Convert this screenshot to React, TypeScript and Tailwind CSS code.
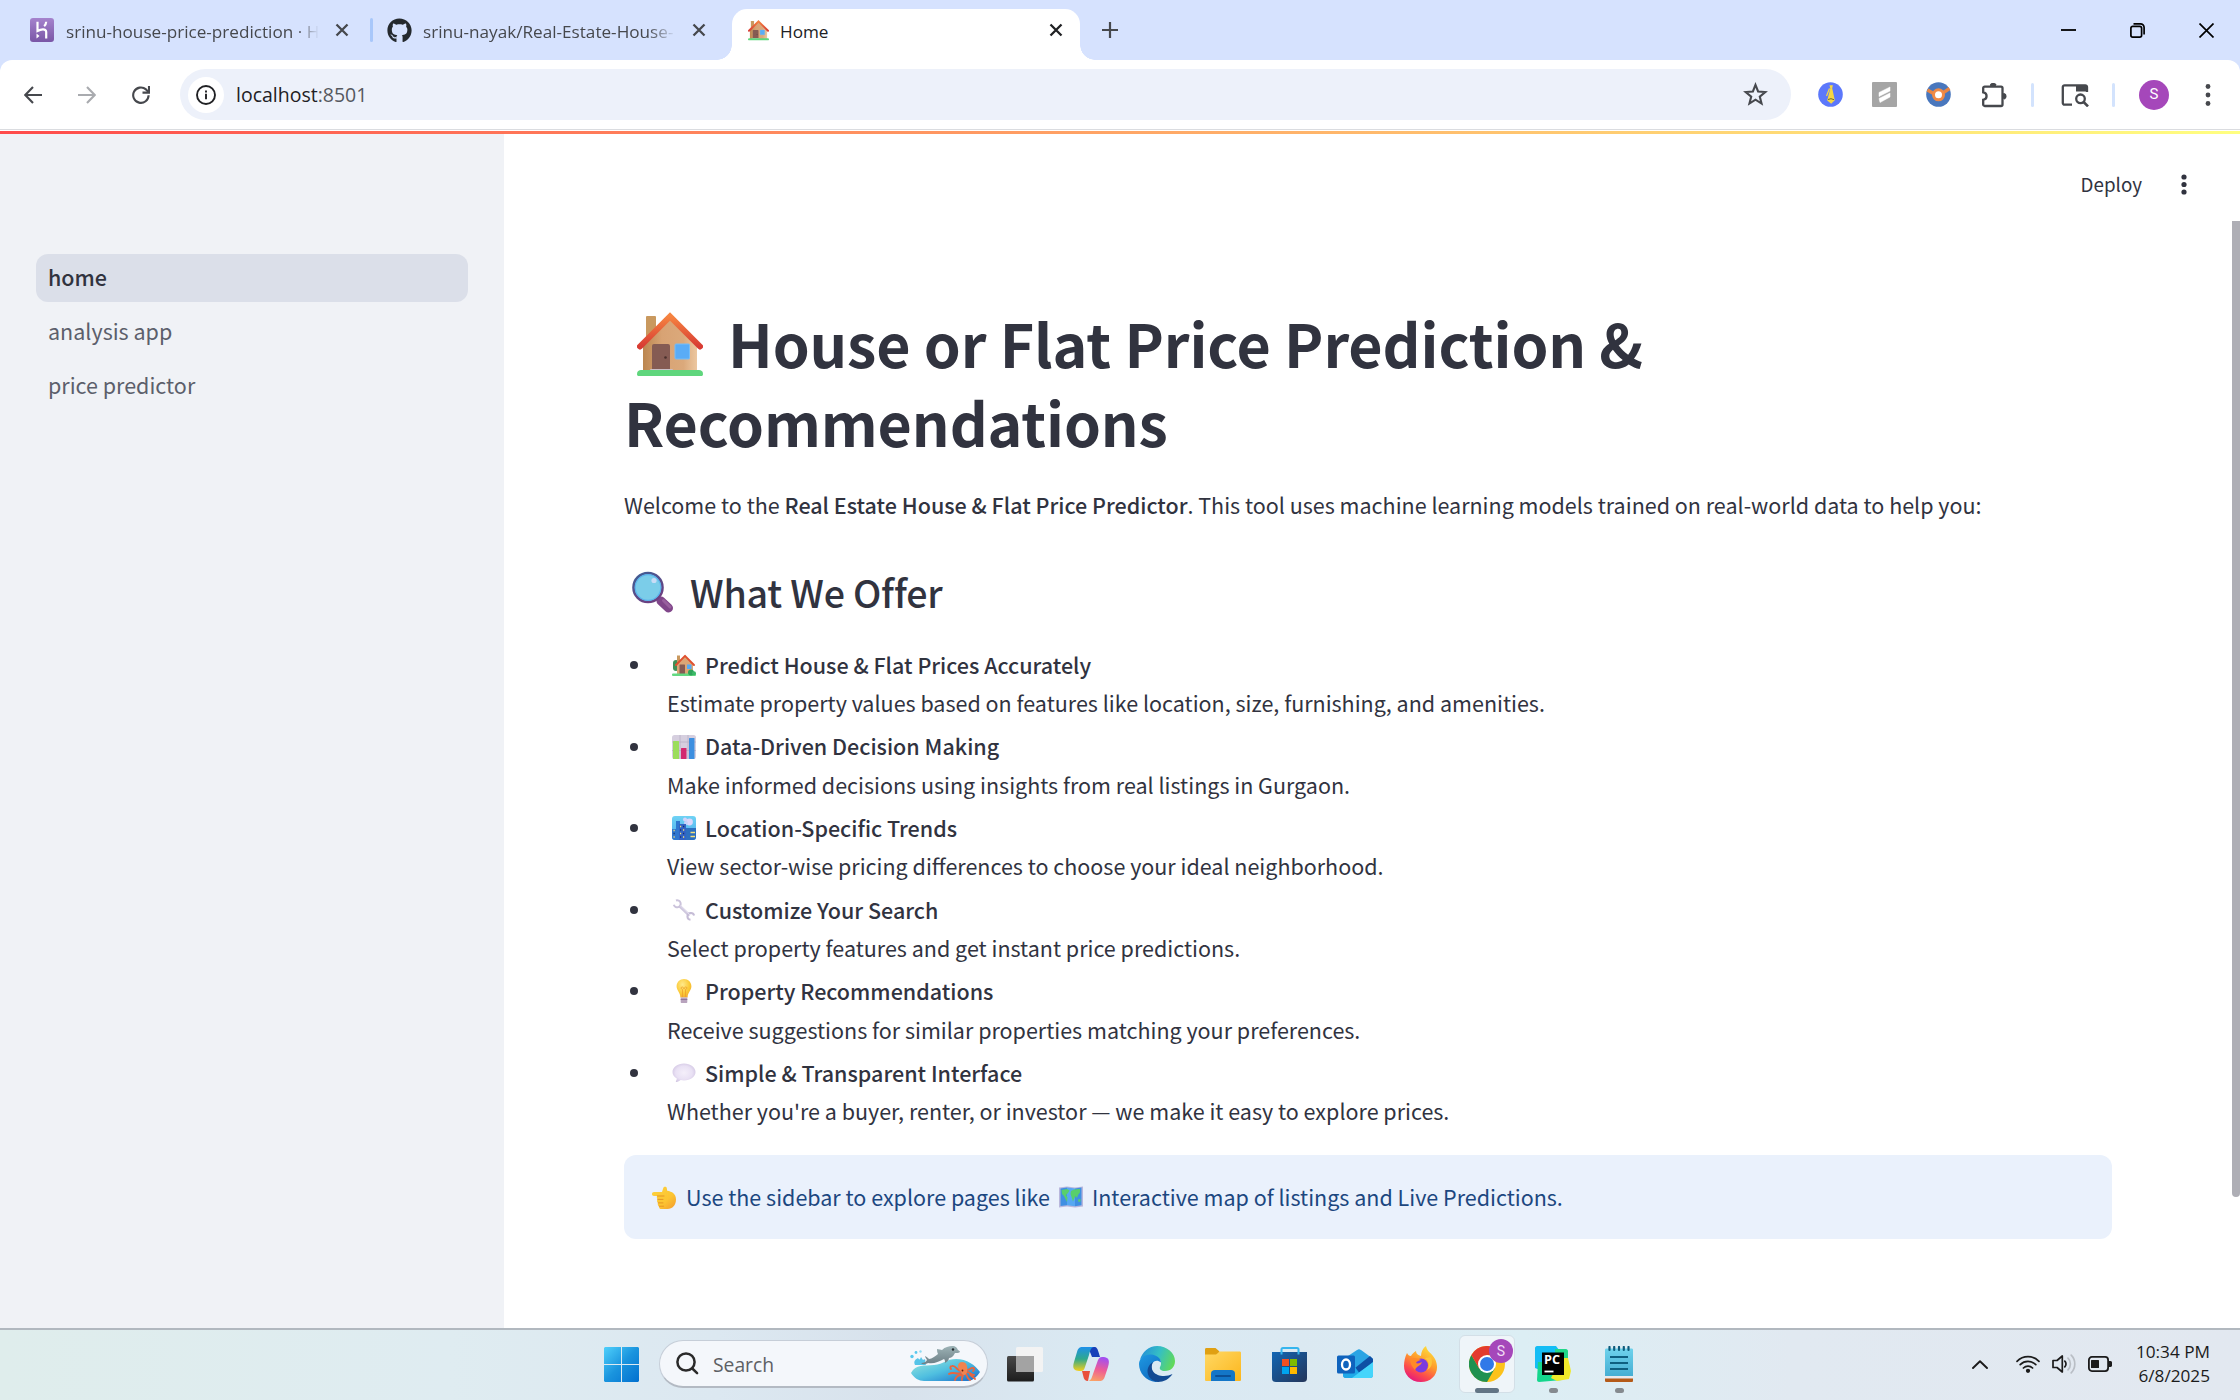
import React from 'react';
import { FaGithub } from 'react-icons/fa';

type IconProps = { className?: string };

/* ---------- emoji drawings ---------- */

function HouseEmoji({ className }: IconProps) {
  return (
    <svg viewBox="0 0 66 64" className={className}>
      <defs>
        <linearGradient id="wall" x1="0" y1="0" x2="1" y2="0">
          <stop offset="0" stopColor="#bb8650" />
          <stop offset="0.35" stopColor="#d8a374" />
          <stop offset="0.75" stopColor="#dba97b" />
          <stop offset="1" stopColor="#ecc7a0" />
        </linearGradient>
        <linearGradient id="roof" x1="0" y1="0" x2="0" y2="1">
          <stop offset="0" stopColor="#f58340" />
          <stop offset="1" stopColor="#d83b33" />
        </linearGradient>
      </defs>
      <rect x="9" y="4" width="10" height="26" rx="1" fill="#c9995f" />
      <path d="M6 33 33 6l27 27v27H6z" fill="url(#wall)" />
      <path d="M3 34.500 33 4.500l30 30" fill="none" stroke="url(#roof)" strokeWidth="6" strokeLinecap="round" strokeLinejoin="miter" />
      <rect x="15" y="32" width="18" height="28" rx="2" fill="#855b53" />
      <circle cx="28.500" cy="45.500" r="1.300" fill="#4a302c" />
      <rect x="13" y="57" width="23" height="3" rx="1" fill="#c9bfc6" />
      <rect x="38" y="32" width="14.500" height="15" rx="1" fill="#5aacf6" stroke="#78bdf5" strokeWidth="1" />
      <path d="M0 62c0-3 2-4 4-4h58c2 0 4 1 4 4 0 1.500-.5 2-2 2H2c-1.500 0-2-.5-2-2z" fill="#5fd67d" />
    </svg>
  );
}

function GardenHouseEmoji({ className }: IconProps) {
  return (
    <svg viewBox="0 0 24 22" className={className}>
      <rect x="1" y="6" width="6" height="11" rx="3" fill="#3f8f57" />
      <rect x="5" y="1.500" width="3" height="7" fill="#c9995f" />
      <path d="M5 10l8-8 8 8v10.500H5z" fill="#dba676" />
      <path d="M4 11 13 1.800 22 11" fill="none" stroke="#e0502f" strokeWidth="1.900" strokeLinecap="round" strokeLinejoin="round" />
      <rect x="7.500" y="10.500" width="5.500" height="9.500" rx="0.600" fill="#855b53" />
      <rect x="15" y="10.500" width="4.500" height="4.500" fill="#55a9f4" />
      <rect x="0" y="19.500" width="24" height="2.500" rx="1" fill="#63d982" />
      <circle cx="19" cy="18.500" r="3" fill="#2fa45a" />
      <circle cx="22" cy="19.200" r="2" fill="#3bb868" />
    </svg>
  );
}

function MagnifierEmoji({ className }: IconProps) {
  return (
    <svg viewBox="0 0 42 42" className={className}>
      <defs>
        <linearGradient id="rim" x1="0" y1="0" x2="0.6" y2="1">
          <stop offset="0" stopColor="#3d5f95" />
          <stop offset="1" stopColor="#6d3f80" />
        </linearGradient>
      </defs>
      <path d="M29 30 36.500 37" stroke="#80468a" strokeWidth="9" strokeLinecap="round" />
      <path d="M31.500 29.500 38 36" stroke="#98609e" strokeWidth="3" strokeLinecap="round" />
      <circle cx="16" cy="16.500" r="14.500" fill="#7bcde9" stroke="url(#rim)" strokeWidth="2.600" />
      <circle cx="16" cy="16.500" r="12.800" fill="none" stroke="#5cb4ec" strokeWidth="1.200" />
      <circle cx="22" cy="9.500" r="2.600" fill="#c9dcf6" />
    </svg>
  );
}

function ChartEmoji({ className }: IconProps) {
  return (
    <svg viewBox="0 0 24 24" className={className}>
      <rect width="24" height="24" rx="2.500" fill="#d6cfdf" />
      <path d="M0 7h24M0 15.500h24M8 0v24M16 0v24" stroke="#b9b0c4" strokeWidth="0.800" />
      <rect x="1" y="6" width="6" height="18" rx="0.500" fill="#9bdd5c" />
      <rect x="9" y="13" width="5.500" height="11" rx="0.500" fill="#d3296f" />
      <rect x="17" y="3" width="5.500" height="21" rx="0.500" fill="#3d8fe0" />
    </svg>
  );
}

function CityEmoji({ className }: IconProps) {
  return (
    <svg viewBox="0 0 24 24" className={className}>
      <defs>
        <clipPath id="cityClip"><rect width="24" height="24" rx="3" /></clipPath>
        <linearGradient id="sky" x1="0" y1="0" x2="0" y2="1">
          <stop offset="0" stopColor="#6fd3f5" />
          <stop offset="1" stopColor="#4aa7ea" />
        </linearGradient>
      </defs>
      <g clipPath="url(#cityClip)">
        <rect width="24" height="24" fill="url(#sky)" />
        <circle cx="13" cy="3.500" r="2" fill="#d3d3fa" />
        <circle cx="17.500" cy="6" r="3.400" fill="#dcd6fb" />
        <circle cx="14" cy="7" r="2" fill="#c7d2f8" />
        <path d="M0 13h4V5h4v19H0z" fill="#2f76cf" />
        <path d="M7 8h7v16H7z" fill="#3263c4" />
        <path d="M14 12h10v12H14z" fill="#2c6fc0" />
        <path d="M8 10.500h1.200M11 14h1.200M8 17.500h1.200M11 21h1.200M1.500 14.500h1.200M1.500 21h1.200" stroke="#f4e07a" strokeWidth="1.500" />
        <path d="M11 10.500h1.200M8 14h1.200M1.500 17.500h1.200M11 17.500h1.200M8 21h1.200" stroke="#16306f" strokeWidth="1.500" />
        <path d="M18.500 16.500H23M18.500 20.500H23" stroke="#f4e07a" strokeWidth="1.400" />
      </g>
    </svg>
  );
}

function WrenchEmoji({ className }: IconProps) {
  return (
    <svg viewBox="0 0 24 24" className={className}>
      <path d="M7.500 8 17.500 17.500" stroke="#cfc8de" strokeWidth="3" />
      <path d="M4 2.500a3.500 3.500 0 1 1-2.200 4.200" fill="none" stroke="#cbc3db" strokeWidth="2" />
      <path d="M18.500 21.800a3.400 3.400 0 1 1 3.600-4.300" fill="none" stroke="#c5bcd6" strokeWidth="2" />
      <path d="M8 7.500 18 17" stroke="#e4dff0" strokeWidth="1" />
    </svg>
  );
}

function BulbEmoji({ className }: IconProps) {
  return (
    <svg viewBox="0 0 24 24" className={className}>
      <defs>
        <radialGradient id="bulb" cx="0.4" cy="0.3" r="0.8">
          <stop offset="0" stopColor="#ffe98a" />
          <stop offset="0.6" stopColor="#fbc934" />
          <stop offset="1" stopColor="#f0a42f" />
        </radialGradient>
      </defs>
      <path d="M12 0c4.200 0 7.400 3.200 7.400 7.300 0 4.200-3.600 5.900-3.800 11.200H8.400C8.200 13.200 4.600 11.500 4.600 7.300 4.600 3.200 7.800 0 12 0z" fill="url(#bulb)" />
      <path d="M10.500 18V10.500c-2-.5-1.500-3 0-2.500s1 2 1.500 2 0-1.500 1.500-2 2 2 0 2.500V18" fill="none" stroke="#eda02c" strokeWidth="0.800" />
      <path d="M8.700 18.500h6.600V23c0 .6-.4 1-1 1H9.700c-.6 0-1-.4-1-1z" fill="#b8a3bd" />
      <path d="M8.700 20.500h6.600" stroke="#8c6f96" strokeWidth="0.900" />
    </svg>
  );
}

function SpeechEmoji({ className }: IconProps) {
  return (
    <svg viewBox="0 0 24 20" className={className}>
      <defs>
        <radialGradient id="speech" cx="0.5" cy="0.5" r="0.6">
          <stop offset="0" stopColor="#f4effa" />
          <stop offset="0.600" stopColor="#e9e1f4" />
          <stop offset="1" stopColor="#cdc0df" />
        </radialGradient>
      </defs>
      <path d="M12 .5c6.400 0 11.500 3.700 11.500 8.500s-5.100 8.500-11.500 8.500c-1.200 0-2.400-.1-3.400-.4-1 1-2.600 1.900-4.300 1.900-.5 0-.6-.5-.3-.9.500-.7.800-1.600.8-2.500C2.200 14.100.5 11.700.5 9 .5 4.200 5.600.5 12 .5z" fill="url(#speech)" />
    </svg>
  );
}

function PointLeftEmoji({ className }: IconProps) {
  return (
    <svg viewBox="0 0 24 23" className={className}>
      <defs>
        <linearGradient id="hand" x1="0" y1="0" x2="1" y2="1">
          <stop offset="0" stopColor="#fdd23e" />
          <stop offset="0.6" stopColor="#fcc532" />
          <stop offset="1" stopColor="#f39a2d" />
        </linearGradient>
      </defs>
      <path d="M2 6h8l1.200-3.800C11.700.3 14.500.2 14.800 2.200l.4 2.600C20 5.500 24 8 24 13.500 24 19 20.500 23 15.500 23H9.500c-2 0-2.800-1.600-2.300-2.800-1.400-.5-1.800-2-1.100-3.200-1.300-.7-1.500-2.600-.4-3.500C4.600 12.500 4.600 11 5.300 10H2C-.7 10-.7 6 2 6z" fill="url(#hand)" />
      <path d="M5.700 13.400H11M6.200 16.900H11M7.200 20.200H11.500M5.300 10H12" stroke="#e28e23" strokeWidth="0.900" strokeLinecap="round" />
    </svg>
  );
}

function MapEmoji({ className }: IconProps) {
  return (
    <svg viewBox="0 0 24 22" className={className}>
      <path d="M0 1.500 8 .5l8 1L24 .5V20.500l-8 1-8-1-8 1z" fill="#b9b7dc" />
      <path d="M1.500 2.500 8 1.500v17.700l-6.500.8z" fill="#3f8fe2" />
      <path d="M8 1.500l8 1v17.700l-8-1z" fill="#56a8f2" />
      <path d="M16 2.500l6.500-1v17.700l-6.500 1z" fill="#3f8fe2" />
      <path d="M2.500 4 8 3l2.500 1.500L9 7 7 9l1.500 2.500L8 16l-1.500-3L5 10 3 8z" fill="#58cf6b" />
      <path d="M12 5l3-1.500L21 3v3.500L19 9l-1 3-1.500-2L15 13l-1 2.500L12.500 11 11.500 8z" fill="#58cf6b" />
      <path d="M19 13.500l2.500-.5v2.500L19.500 16z" fill="#58cf6b" />
    </svg>
  );
}

/* ---------- browser chrome ---------- */

function HerokuIcon() {
  return (
    <svg viewBox="0 0 24 24" className="size-6">
      <defs>
        <linearGradient id="heroku" x1="0" y1="0" x2="0" y2="1">
          <stop offset="0" stopColor="#a583cd" />
          <stop offset="1" stopColor="#7a56a6" />
        </linearGradient>
      </defs>
      <rect width="24" height="24" rx="3" fill="url(#heroku)" />
      <path d="M7.500 3.800V13c3-1.600 8.700-2.800 8.700.9v6.500M16.200 3.800c-.1 1.900-.8 3.300-2.100 4.400" fill="none" stroke="#fff" strokeWidth="2.200" />
      <path d="M6.500 15.500l3 2.500-3 2.500z" fill="#fff" />
    </svg>
  );
}

function CloseMark({ className }: IconProps) {
  return (
    <svg viewBox="0 0 14 14" className={className} fill="none" stroke="currentColor" strokeWidth="2.300">
      <path d="M1.500 1.500l11 11M12.500 1.500l-11 11" />
    </svg>
  );
}

function TabStrip() {
  return (
    <div className="flex h-[60px] bg-[#d6e2fe] font-['Open_Sans','Noto_Sans',sans-serif] text-[17.15px] leading-6 text-[#46484d]">
      <div className="flex w-[370px] items-center pl-[30px]">
        <HerokuIcon />
        <div className="mt-[3px] ml-3 w-[253px] overflow-hidden whitespace-nowrap [mask-image:linear-gradient(90deg,#000_91%,transparent)]">
          srinu-house-price-prediction · H
        </div>
        <CloseMark className="ml-4 size-[14px]" />
      </div>
      <div className="mt-[18px] h-6 w-[3px] rounded-full bg-[#a8c7fa]" />
      <div className="flex w-[359px] items-center pl-[14px]">
        <FaGithub className="size-[25px] text-[#24292e]" />
        <div className="mt-[3px] ml-[11px] w-[253px] overflow-hidden whitespace-nowrap [mask-image:linear-gradient(90deg,#000_89%,transparent)]">
          srinu-nayak/Real-Estate-House-
        </div>
        <CloseMark className="ml-4 size-[14px]" />
      </div>
      <div className="relative mt-[9px] flex h-[51px] w-[348px] items-center rounded-t-[15px] bg-white pb-[9px] pl-4 text-[#202124]">
        <div className="absolute bottom-0 -left-[15px] size-[15px] bg-[radial-gradient(circle_at_0_0,transparent_14.5px,white_15px)]" />
        <div className="absolute -right-[15px] bottom-0 size-[15px] bg-[radial-gradient(circle_at_100%_0,transparent_14.5px,white_15px)]" />
        <HouseEmoji className="h-[22px] w-[21px]" />
        <span className="mt-[3px] ml-[11px] flex-1">Home</span>
        <CloseMark className="mr-[17px] size-[14px]" />
      </div>
      <svg viewBox="0 0 16 16" className="mt-[22px] ml-[22px] size-4 text-[#46484d]" stroke="currentColor" strokeWidth="2.200">
        <path d="M8 0v16M0 8h16" />
      </svg>
      <div className="mr-[26px] ml-auto flex items-center gap-[54px] text-black">
        <svg viewBox="0 0 15 15" className="size-[15px]"><path d="M0 7h15" stroke="currentColor" strokeWidth="1.800" /></svg>
        <svg viewBox="0 0 15 15" className="size-[15px]" fill="none" stroke="currentColor" strokeWidth="1.700">
          <rect x="0.900" y="3.400" width="10.700" height="10.700" rx="1.800" />
          <path d="M3.500.9h7a3.600 3.600 0 0 1 3.600 3.600v7" />
        </svg>
        <svg viewBox="0 0 15 15" className="size-[15px]"><path d="M.5.5l14 14M14.500.5l-14 14" stroke="currentColor" strokeWidth="1.700" /></svg>
      </div>
    </div>
  );
}

function Toolbar() {
  return (
    <div className="h-[70px] bg-[#d6e2fe]">
      <div className="flex h-[70px] items-center rounded-t-xl border-b border-[#dadce0] bg-white pl-[24px] text-[#46484d]">
        <svg viewBox="0 0 18 18" className="size-[18px]" fill="none" stroke="currentColor" strokeWidth="2.100">
          <path d="M18 9H1.500M9 1L1.300 9 9 17" />
        </svg>
        <svg viewBox="0 0 18 18" className="ml-[36px] size-[18px] text-[#a9abaf]" fill="none" stroke="currentColor" strokeWidth="2.100">
          <path d="M0 9h16.500M9 1l7.700 8L9 17" />
        </svg>
        <svg viewBox="0 0 18 18" className="ml-[36px] size-[18px]" fill="none" stroke="currentColor" strokeWidth="2.100">
          <path d="M16.600 9.200A7.700 7.700 0 1 1 14 3.400l2.300 2.300" />
          <path d="M17 0v6.600h-6.500" />
        </svg>
        <div className="ml-[30px] flex h-[51px] w-[1611px] items-center rounded-full bg-[#edf1fa] pr-[23px] pl-2">
          <div className="flex size-9 items-center justify-center rounded-full bg-white text-[#202124]">
            <svg viewBox="0 0 20 20" className="size-5" fill="none" stroke="currentColor" strokeWidth="1.900">
              <circle cx="10" cy="10" r="9" />
              <path d="M10 8.800v5.400M10 5.600v2" />
            </svg>
          </div>
          <div className="ml-3 flex-1 font-['Open_Sans','Noto_Sans',sans-serif] text-[19.5px] leading-7 text-[#1f2023]">
            localhost<span className="text-[#55585e]">:8501</span>
          </div>
          <svg viewBox="0 0 24 24" className="size-[25px]" fill="none" stroke="currentColor" strokeWidth="2">
            <path d="M12 2.700l2.500 6.400 6.900.5-5.300 4.400 1.700 6.700L12 17l-5.800 3.700L7.900 14 2.600 9.600l6.900-.5z" />
          </svg>
        </div>
        <svg viewBox="0 0 25 25" className="ml-[27px] size-[25px]">
          <circle cx="12.500" cy="12.500" r="12.300" fill="#5c78fb" />
          <path d="M11.500 3.200h3.400l-.7 3 2.600 12-3.600 3.600-4-3.300L12.300 6.500z" fill="#f6d743" />
          <path d="M11.500 6.500 8.500 14" stroke="#f6d743" strokeWidth="1.200" />
          <path d="M10 17.500l3-.8 3 1" stroke="#5a5a2c" strokeWidth="0.900" fill="none" />
        </svg>
        <svg viewBox="0 0 25 25" className="ml-[29px] size-[25px]">
          <rect width="25" height="25" rx="1" fill="#a5a5a5" />
          <path d="M7 10.500 18 5v4L7 14.500zM7 16.500l11-5.500v4L8 20.500z" fill="#fff" stroke="#fff" strokeWidth="0.500" strokeLinejoin="round" />
        </svg>
        <svg viewBox="0 0 25 25" className="ml-[29px] size-[25px]">
          <circle cx="12.500" cy="12.500" r="12.300" fill="#4977bd" />
          <path d="M1.500 8l6 3.500M23.500 6.500l-6.500 4.300" stroke="#e98543" strokeWidth="3.400" />
          <circle cx="12.500" cy="12.800" r="5" fill="#fff" stroke="#f08a46" strokeWidth="3" />
        </svg>
        <svg viewBox="0 0 26 26" className="ml-[30px] size-[26px]" fill="none" stroke="currentColor" strokeWidth="2.300">
          <path d="M3.700 4.600H20a1.500 1.500 0 0 1 1.500 1.500v16.400a1.500 1.500 0 0 1-1.500 1.500H3.700a1.500 1.500 0 0 1-1.500-1.500v-4.700c4.500-.6 4.500-6.900 0-7.500V6.100a1.500 1.500 0 0 1 1.500-1.500z" />
          <path d="M9 4a3 3 0 0 1 6 0zM21.500 11a3 3 0 0 1 0 6z" fill="currentColor" stroke="none" />
          <path d="M10 3.200a2.400 1.600 0 0 1 4.600 0M23 12a2 2.400 0 0 1 0 4.600" />
        </svg>
        <div className="ml-6 h-6 w-[3px] rounded-full bg-[#d3e3fd]" />
        <svg viewBox="0 0 28 24" className="ml-[27px] h-6 w-7" fill="none" stroke="currentColor" strokeWidth="2.300">
          <path d="M11 21.700H3.500A1.700 1.700 0 0 1 1.800 20V4a1.700 1.700 0 0 1 1.700-1.700h20.800a1.700 1.700 0 0 1 1.700 1.700v5" />
          <path d="M15 2h11v6.500H15z" fill="currentColor" stroke="none" />
          <circle cx="19.500" cy="15.800" r="4.300" />
          <path d="M22.600 19l4.400 4.400" strokeWidth="2.600" />
        </svg>
        <div className="ml-[23px] h-6 w-[3px] rounded-full bg-[#d3e3fd]" />
        <div className="ml-[24px] flex size-[30px] items-center justify-center rounded-full bg-[#a547ba] font-['Roboto',sans-serif] text-[15px] text-white">S</div>
        <svg viewBox="0 0 6 22" className="ml-[36px] h-[22px] w-1.5 fill-current">
          <circle cx="3" cy="2.500" r="2.400" /><circle cx="3" cy="11" r="2.400" /><circle cx="3" cy="19.500" r="2.400" />
        </svg>
      </div>
    </div>
  );
}

/* ---------- page ---------- */

const offers = [
  { Icon: GardenHouseEmoji, title: 'Predict House & Flat Prices Accurately', text: 'Estimate property values based on features like location, size, furnishing, and amenities.' },
  { Icon: ChartEmoji, title: 'Data-Driven Decision Making', text: 'Make informed decisions using insights from real listings in Gurgaon.' },
  { Icon: CityEmoji, title: 'Location-Specific Trends', text: 'View sector-wise pricing differences to choose your ideal neighborhood.' },
  { Icon: WrenchEmoji, title: 'Customize Your Search', text: 'Select property features and get instant price predictions.' },
  { Icon: BulbEmoji, title: 'Property Recommendations', text: 'Receive suggestions for similar properties matching your preferences.' },
  { Icon: SpeechEmoji, title: 'Simple & Transparent Interface', text: "Whether you're a buyer, renter, or investor — we make it easy to explore prices." },
];

function Sidebar() {
  return (
    <nav className="flex w-[504px] flex-col gap-1.5 bg-[#f0f2f6] px-9 pt-[120px] leading-[46px] text-[#5c5f6b]">
      <a className="h-12 rounded-xl bg-[#dbdfe9] pl-3 font-medium text-[#31333f]">home</a>
      <a className="h-12 pl-3">analysis app</a>
      <a className="h-12 pl-3">price predictor</a>
    </nav>
  );
}

function Content() {
  return (
    <main className="flex w-[1736px] bg-white text-[#31333f]">
      <div className="w-[1608px] shrink-0 pt-[169px] pl-[120px]">
        <h1 className="text-[59.1px] leading-[79.2px] font-bold tracking-[-0.1px]">
          <span className="flex items-center">
            <HouseEmoji className="mt-[3px] mr-[25px] ml-[13px] h-[64px] w-[66px]" />
            House or Flat Price Prediction &
          </span>
          <span className="block">Recommendations</span>
        </h1>
        <p className="mt-[25px]">
          Welcome to the <strong className="font-medium">Real Estate House &amp; Flat Price Predictor</strong>. This tool uses machine learning models trained on real-world data to help you:
        </p>
        <h3 className="mt-[42px] flex h-[50px] items-center text-[37.6px] leading-[50px] font-medium tracking-[-0.2px]">
          <MagnifierEmoji className="mr-4 ml-2 size-[42px]" />
          What We Offer
        </h3>
        <ul className="mt-[29px] flex flex-col gap-[4.800px]">
          {offers.map(({ Icon, title, text }) => (
            <li key={title}>
              <div className="flex h-[38.4px] items-center font-medium">
                <span className="mr-[34px] ml-1.5 size-2 rounded-full bg-[#31333f]" />
                <Icon className="mr-[9px] h-6 w-6" />
                {title}
              </div>
              <div className="h-[38.4px] pl-[43px]">{text}</div>
            </li>
          ))}
        </ul>
        <div className="mt-[25px] flex h-[84px] items-center rounded-xl bg-[#eaf1fc] pl-[28px] text-[#1c4780]">
          <PointLeftEmoji className="mr-[10px] h-[23px] w-6" />
          Use the sidebar to explore pages like
          <MapEmoji className="mx-[9px] h-[22px] w-6" />
          Interactive map of listings and Live Predictions.
        </div>
      </div>
      <div className="flex w-[128px] flex-col items-end">
        <div className="mt-[35px] mr-[53px] flex h-[30px] shrink-0 items-center text-[18.8px] leading-[30px]">
          Deploy
          <svg viewBox="0 0 6 21" className="mt-px ml-[39px] h-[21px] w-1.5 shrink-0 fill-current">
            <circle cx="3" cy="3" r="2.600" /><circle cx="3" cy="10.500" r="2.600" /><circle cx="3" cy="18" r="2.600" />
          </svg>
        </div>
        <div className="mt-[22px] h-[976px] w-2 rounded-b bg-[#aeaeb5]" />
      </div>
    </main>
  );
}

/* ---------- taskbar ---------- */

function WindowsIcon() {
  return (
    <svg viewBox="0 0 35 35" className="size-[35px]">
      <defs>
        <linearGradient id="win" x1="0" y1="0" x2="35" y2="35" gradientUnits="userSpaceOnUse">
          <stop offset="0" stopColor="#4fd0fb" /><stop offset="0.500" stopColor="#1a94de" /><stop offset="1" stopColor="#0270cf" />
        </linearGradient>
      </defs>
      <path d="M1 0h16v17H0V1zM18 0h16l1 1v16H18zM0 18h17v17H1l-1-1zM18 18h17v16l-1 1H18z" fill="url(#win)" />
    </svg>
  );
}

function SeaScene() {
  return (
    <svg viewBox="0 0 70 37" className="h-[37px] w-[70px]">
      <defs>
        <linearGradient id="sea" x1="0" y1="0" x2="1" y2="1">
          <stop offset="0" stopColor="#9be8dc" /><stop offset="0.500" stopColor="#4fbfe0" /><stop offset="1" stopColor="#1769c9" />
        </linearGradient>
        <linearGradient id="dolphin" x1="0" y1="0" x2="0" y2="1">
          <stop offset="0" stopColor="#9db3b6" /><stop offset="1" stopColor="#6d7f86" />
        </linearGradient>
      </defs>
      <path d="M1 28C6 19 14 21 24 20c10-1 12-6 22-6 11 0 19 6 24 13-3 5-8 9-12 9H14C9 36 4 33 1 28z" fill="url(#sea)" />
      <path d="M5 20c-2-4 1-6 3-7 1 2 2 2 3-1l2 3c2-2 3 0 2 2l1 3z" fill="#56c4e8" />
      <circle cx="2" cy="11.500" r="1.700" fill="#58c8ee" /><circle cx="6" cy="7.500" r="1.400" fill="#58c8ee" /><circle cx="10.500" cy="6.500" r="1.200" fill="#8fdaf2" />
      <path d="M11 18c3 0 5-1 6-3-1-2-2-3-2-4 2 1 3 2 4 3 3 0 6-3 9-5-1-2-1-4-1-5 2 0 4 1 5 1 3-3 7-4 10-4 4 0 5 2 6 4 1 1 2 1 2 2-1 1-3 1-5 1-2 4-4 5-6 5 0 2-2 4-4 5 0-2 0-3-1-4-6 3-10 5-16 4-2 1-5 2-7 0z" fill="url(#dolphin)" />
      <circle cx="43" cy="4.500" r="1.200" fill="#242c30" />
      <g fill="none" stroke="#e8653f" strokeWidth="1.900" strokeLinecap="round">
        <path d="M51 26c-4 0-5-6-9-5-2 0-2 2-1 3M51 28c-4 2-8-2-12 1M52 30c-3 0-6 1-7 5M53 30c0 2-2 3-1 5M56 29c1 2 1 4 4 6M57 27c3 0 4 3 7 3M57 25c3 0 4-3 6-2 2 0 1 2 0 3M60 29c0 2 3 2 5 5" />
      </g>
      <path d="M51 27c-5-5-3-10 1-10 5 0 6 5 5 10-1 4-5 4-6 0z" fill="#f2834f" />
      <circle cx="52.500" cy="25.500" r="0.900" fill="#5a2117" />
    </svg>
  );
}

function CopilotIcon() {
  return (
    <svg viewBox="0 0 36 34" className="h-[34px] w-9">
      <defs>
        <linearGradient id="copA" x1="0" y1="0" x2="0" y2="1">
          <stop offset="0" stopColor="#1e90ea" /><stop offset="0.500" stopColor="#2fa98c" /><stop offset="1" stopColor="#f5cf1b" />
        </linearGradient>
        <linearGradient id="copB" x1="0.500" y1="0" x2="0.300" y2="1">
          <stop offset="0" stopColor="#a34ff0" /><stop offset="0.500" stopColor="#ee5c95" /><stop offset="1" stopColor="#f9a266" />
        </linearGradient>
      </defs>
      <path d="M15 0h6c3 0 3.500 2 4.500 5l1.500 5h-8z" fill="#173fb9" />
      <path d="M15 34c-3 0-4-2-4.500-4L9 24h8z" fill="#e9503c" />
      <path d="M9 0h12c-3 0-4 4-5 8l-4 12c-1 3-2 4-4 4C1 24-1 22 1 15L4 5c1-4 3-5 5-5z" fill="url(#copA)" />
      <path d="M27 34H15c3 0 4-4 5-7l5-14c1-2 2-3 4-3 7 0 8 3 6 10l-3 9c-1 4-3 5-5 5z" fill="url(#copB)" />
    </svg>
  );
}

function EdgeIcon() {
  return (
    <svg viewBox="0 0 36 36" className="size-9">
      <defs>
        <linearGradient id="edgeTop" x1="0" y1="0.300" x2="1" y2="0.600">
          <stop offset="0" stopColor="#2590d8" /><stop offset="0.500" stopColor="#35bfc4" /><stop offset="1" stopColor="#62da58" />
        </linearGradient>
        <linearGradient id="edgeSide" x1="0" y1="0" x2="0.600" y2="1">
          <stop offset="0" stopColor="#1f9ae2" /><stop offset="1" stopColor="#0f6ac0" />
        </linearGradient>
      </defs>
      <path d="M1 14C3 6 10 0 18 0c10 0 18 7 18 15 0 6-4 10-10 10-4 0-6-2-5-4 2-3 2-10-7-11C8 10 3 11 1 14z" fill="url(#edgeTop)" />
      <path d="M0 18C0 12 6 8 12 8.500c6 .5 10 4 10 8-5-4-10 0-9.500 5 .5 6 5 11 11 12-2 1.500-5 2.500-7 2.500C7 35 0 27 0 18z" fill="url(#edgeSide)" />
      <path d="M14 16c-4 8 2 14 11 14 3 0 6-1 8.500-2-3 5-9 8-14.500 8C11 35 7 28 9 22c1-3 3-5 5-6z" fill="#124a93" />
    </svg>
  );
}

function ExplorerIcon() {
  return (
    <svg viewBox="0 0 36 33" className="h-[33px] w-9">
      <defs>
        <linearGradient id="folder" x1="0" y1="0" x2="1" y2="1">
          <stop offset="0" stopColor="#ffd864" /><stop offset="1" stopColor="#fcb61c" />
        </linearGradient>
      </defs>
      <path d="M0 1.500C0 .5.500 0 1.500 0h9l4 3.500-3 4.500H0z" fill="#e0a012" />
      <path d="M0 6.500h11l4-3h19.500c1 0 1.500.5 1.500 1.500v26.500c0 1-.5 1.500-1.500 1.500h-33C.5 33 0 32.500 0 31.500z" fill="url(#folder)" />
      <path d="M6 33v-7c0-3 1.500-4 4-4h16c2.500 0 4 1 4 4v7z" fill="#1376c8" />
      <path d="M11 28h14" stroke="#0b4f96" strokeWidth="2" strokeLinecap="round" />
    </svg>
  );
}

function StoreIcon() {
  return (
    <svg viewBox="0 0 35 35" className="size-[35px]">
      <defs>
        <linearGradient id="store" x1="0" y1="0" x2="1" y2="1">
          <stop offset="0" stopColor="#1266b4" /><stop offset="1" stopColor="#243559" />
        </linearGradient>
      </defs>
      <path d="M9.500 8V2.500c0-1 .5-1.500 1.500-1.500h14c1 0 1.500.5 1.500 1.500V8" fill="none" stroke="#35b5ee" strokeWidth="2" />
      <path d="M0 5h35v26c0 3-1.500 4-4 4H4c-2.500 0-4-1-4-4z" fill="url(#store)" />
      <path d="M9.500 5v2.500M26.500 5v2.500" stroke="#35b5ee" strokeWidth="2" />
      <path d="M10 12h7v7h-7z" fill="#f25022" /><path d="M18 12h7v7h-7z" fill="#7fba00" />
      <path d="M10 20h7v7h-7z" fill="#00a4ef" /><path d="M18 20h7v7h-7z" fill="#ffb900" />
    </svg>
  );
}

function OutlookIcon() {
  return (
    <svg viewBox="0 0 36 36" className="size-9">
      <path d="M8 12 20 4c2-1 2-1 4 0l11 8c1 1 1 1 1 2v15c0 2-1 3-3 3H9c-2 0-3-1-3-3z" fill="#2aa4e4" />
      <path d="M18 22 33 10l3 3v4L21 27z" fill="#0e4fa5" />
      <path d="M6 21h12l8 11H9c-2 0-3-1-3-3z" fill="#1fa9e8" />
      <path d="M36 16v13c0 2-1 3-3 3H15z" fill="#45d5fb" />
      <rect y="9.500" width="18" height="18" rx="1.500" fill="#0f63bd" />
      <ellipse cx="9" cy="18.500" rx="4" ry="5" fill="none" stroke="#fff" strokeWidth="2.300" />
    </svg>
  );
}

function FirefoxIcon() {
  return (
    <svg viewBox="0 0 34 36" className="h-9 w-[34px]">
      <defs>
        <linearGradient id="fox" x1="0.800" y1="0" x2="0.300" y2="1">
          <stop offset="0" stopColor="#fde53e" /><stop offset="0.450" stopColor="#ff9a2c" /><stop offset="0.750" stopColor="#fb4a4d" /><stop offset="1" stopColor="#e4177f" />
        </linearGradient>
      </defs>
      <path d="M3 7c1 2 2 3 4 3 1-2 3-4 5-5 0 3 2 4 5 5 0-4 2-8 5-10 1 6 6 7 9 13 6 12-2 23-14 23C6 36 0 28 0 20c0-5 1-9 3-13z" fill="url(#fox)" />
      <circle cx="17" cy="19.500" r="7" fill="#7a3be0" />
      <path d="M6 13c4-2 8-1 11 1-3 1-4 1-5 3 2 1 4 0 6-1-1 4-6 4-7 8-3-3-5-7-5-11z" fill="#ff8a28" />
      <path d="M21 12c4 3 5 8 2 12 5-2 6-8 4-13z" fill="#fec53a" />
    </svg>
  );
}

function ChromeIcon() {
  return (
    <svg viewBox="0 0 36 36" className="size-9">
      <circle cx="18" cy="18" r="18" fill="#fcc21b" />
      <path d="M2.400 9A18 18 0 0 0 18 36l7.800-13.500L18 18 10.200 22.500z" fill="#209150" />
      <path d="M2.400 9A18 18 0 0 1 33.600 9H18v9l-7.800 4.500z" fill="#e33b2e" />
      <circle cx="18" cy="18" r="9" fill="#fff" /><circle cx="18" cy="18" r="7" fill="#3079e8" />
    </svg>
  );
}

function PyCharmIcon() {
  return (
    <svg viewBox="0 0 36 36" className="size-9">
      <path d="M0 2c0-1 1-2 2-2h19l6 8L5 24 0 22z" fill="#14bdf5" />
      <path d="M20 3h11c1 0 2 1 2 2v9L20 20z" fill="#21d789" />
      <path d="M3 16h10l14 18-23 2c-1 0-2-1-2-2z" fill="#14d68d" />
      <path d="M27 12h6l3 13-2 8-12 2-6-3 6-12z" fill="#f0ea2a" />
      <rect x="7" y="6.500" width="22" height="22.500" fill="#000" />
      <text x="9" y="18" fontSize="11.500" fontWeight="700" fill="#fff" fontFamily="Open Sans, sans-serif" textLength="16" lengthAdjust="spacingAndGlyphs">PC</text>
      <path d="M9.500 25.500h9" stroke="#fff" strokeWidth="1.800" />
    </svg>
  );
}

function NotepadIcon() {
  return (
    <svg viewBox="0 0 28 36" className="h-9 w-7">
      <defs>
        <linearGradient id="note" x1="0" y1="0" x2="0" y2="1">
          <stop offset="0" stopColor="#6fd2ec" /><stop offset="1" stopColor="#45aed3" />
        </linearGradient>
      </defs>
      <path d="M0 31h28v3.500c0 1-.5 1.500-1.500 1.500h-25C.5 36 0 35.500 0 34.500z" fill="#b45a19" />
      <path d="M0 29h28v3.500H0z" fill="#e9e9ec" />
      <path d="M1.500 2.500h25c1 0 1.500.5 1.500 1.500v26H0V4c0-1 .5-1.500 1.500-1.500z" fill="url(#note)" />
      <path d="M4.500 1v3M9.200 1v3M14 1v3M18.800 1v3M23.500 1v3" stroke="#0e5c7c" strokeWidth="2.200" strokeLinecap="round" />
      <path d="M5 11h18M5 17h18M5 23h18" stroke="#0e5f80" strokeWidth="1.900" />
    </svg>
  );
}

function TaskViewIcon() {
  return (
    <svg viewBox="0 0 36 35" className="h-[35px] w-9">
      <defs>
        <linearGradient id="tv" x1="0" y1="0" x2="0" y2="1">
          <stop offset="0" stopColor="#484848" /><stop offset="1" stopColor="#1d1d1d" />
        </linearGradient>
      </defs>
      <rect y="9" width="27" height="25.500" rx="1.500" fill="url(#tv)" />
      <rect x="9" y="0" width="27" height="25" rx="1.500" fill="#f3f3f3" />
      <path d="M9 9h18v16H10.500L9 23.500z" fill="#a3a3a3" />
    </svg>
  );
}

function Slot({ children, running }: { children: React.ReactNode; running?: boolean }) {
  return (
    <div className="relative flex h-[58px] w-14 items-center justify-center">
      {children}
      {running && <span className="absolute bottom-0 h-[5px] w-[9px] rounded-full bg-[#858a8f]" />}
    </div>
  );
}

function Taskbar() {
  return (
    <div className="flex h-[72px] items-start border-t-2 border-[#b1b8bf] bg-[linear-gradient(90deg,#dfedec_0%,#dfecf1_20%,#dce8f1_32%,#d8e2ec_40%,#daeaf3_50%,#dbe9f2_58%,#dceef4_68%,#e1e9f1_80%,#e2e8f0_100%)] pt-[5px]">
      <div className="ml-[593px] flex items-center gap-2.5">
        <Slot><WindowsIcon /></Slot>
        <div className="-mr-px flex h-12 w-[329px] items-center rounded-full border border-b-2 border-[#c6ced8] border-b-[#b3bac3] bg-[#f4f7fb] pr-[7px] pl-[16px]">
          <svg viewBox="0 0 23 23" className="size-[23px]" fill="none" stroke="#2a2a2a" strokeWidth="2.500" strokeLinecap="round">
            <circle cx="10" cy="10" r="8.600" /><path d="M16.300 16.500l4.800 4.700" />
          </svg>
          <span className="mt-[3px] ml-[14px] flex-1 font-['Open_Sans','Noto_Sans',sans-serif] text-[19.3px] text-[#5d6064]">Search</span>
          <SeaScene />
        </div>
        <Slot><TaskViewIcon /></Slot>
        <Slot><CopilotIcon /></Slot>
        <Slot><EdgeIcon /></Slot>
        <Slot><ExplorerIcon /></Slot>
        <Slot><StoreIcon /></Slot>
        <Slot><OutlookIcon /></Slot>
        <Slot><FirefoxIcon /></Slot>
        <div className="relative flex h-[58px] w-14 items-center justify-center rounded-md border border-[#d3dfe7] bg-[#eff5f9]">
          <ChromeIcon />
          <span className="absolute top-[3px] right-[1px] flex size-6 items-center justify-center rounded-full bg-[#a547ba] font-['Roboto',sans-serif] text-[14px] text-[#f0dcf5]">S</span>
          <span className="absolute -bottom-px h-[5px] w-6 rounded-full bg-[#627585]" />
        </div>
        <Slot running><PyCharmIcon /></Slot>
        <Slot running><NotepadIcon /></Slot>
      </div>
      <div className="mr-[30px] ml-auto flex h-[58px] items-center text-[#1b1b1b]">
        <svg viewBox="0 0 16 9" className="h-[9px] w-4" fill="none" stroke="currentColor" strokeWidth="1.900" strokeLinecap="round" strokeLinejoin="round"><path d="M1 8l7-6.800L15 8" /></svg>
        <svg viewBox="0 0 24 18" className="ml-7 h-[18px] w-6" fill="none" stroke="currentColor" strokeWidth="1.700" strokeLinecap="round">
          <path d="M1 6.300a15.500 15.500 0 0 1 22 0M4.200 9.700a11 11 0 0 1 15.600 0M7.400 13a6.500 6.500 0 0 1 9.200 0" />
          <circle cx="12" cy="15.800" r="1.300" fill="currentColor" />
        </svg>
        <svg viewBox="0 0 24 20" className="ml-3 h-5 w-6" fill="none" stroke="currentColor" strokeWidth="1.700" strokeLinejoin="round" strokeLinecap="round">
          <path d="M1 6.500h4L10.300 2v16L5 13.500H1z" />
          <path d="M12.800 7.200c1.600 1.500 1.600 4 0 5.600" />
          <path d="M16 4.200c3.200 3 3.200 8.500 0 11.600M19.200 1.200c4.800 4.800 4.800 12.800 0 17.600" stroke="#b9bec5" />
        </svg>
        <svg viewBox="0 0 24 16" className="ml-3 h-4 w-6" fill="none" stroke="currentColor" strokeWidth="1.800">
          <rect x="0.900" y="0.900" width="19.200" height="14.200" rx="3" />
          <rect x="3" y="4" width="8" height="8" rx="0.500" fill="currentColor" stroke="none" />
          <path d="M21 5h1.500c1 0 1.500.8 1.500 1.500v3c0 .7-.5 1.500-1.500 1.500H21z" fill="currentColor" stroke="none" />
        </svg>
        <div className="ml-[24px] text-right font-['Open_Sans','Noto_Sans',sans-serif] text-[17.2px] leading-6">
          <div>10:34 PM</div>
          <div>6/8/2025</div>
        </div>
      </div>
    </div>
  );
}

export default function App() {
  return (
    <div className="flex h-[1400px] w-[2240px] flex-col overflow-hidden bg-white">
      <TabStrip />
      <Toolbar />
      <div className="mt-px h-[3px] bg-[linear-gradient(90deg,#ff4b4b,#ffff80)]" />
      <div className="flex h-[1194px] font-['Noto_Sans_CJK_SC','Noto_Sans',sans-serif] text-[21.5px] leading-[38.4px]">
        <Sidebar />
        <Content />
      </div>
      <Taskbar />
    </div>
  );
}
